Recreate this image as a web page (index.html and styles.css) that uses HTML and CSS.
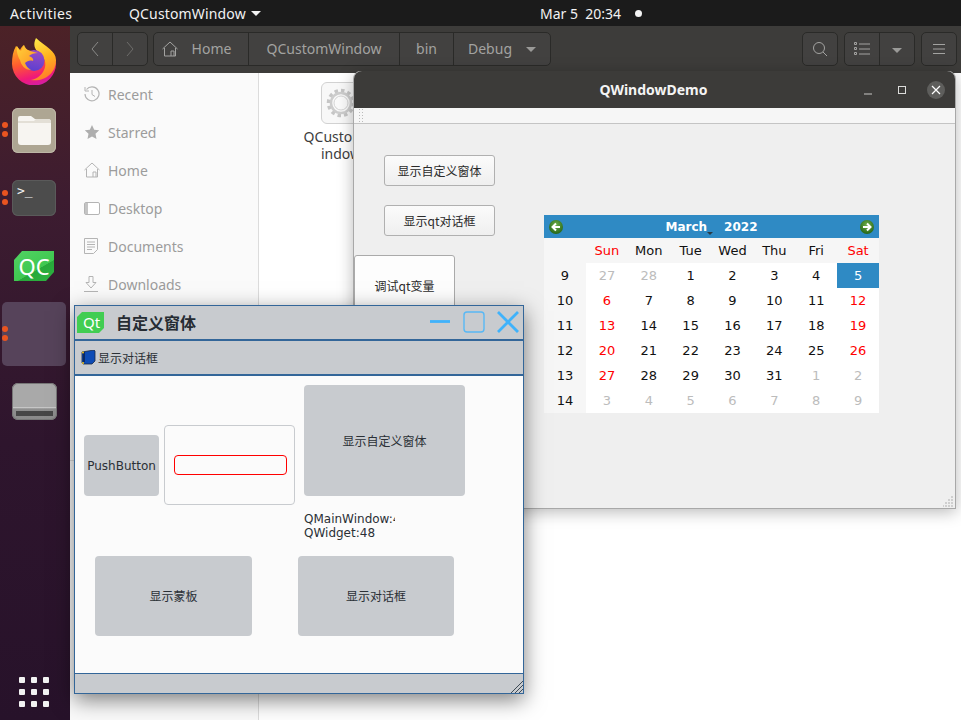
FILE: index.html
```html
<!DOCTYPE html>
<html lang="en">
<head>
<meta charset="utf-8">
<title>QCustomWindow</title>
<link rel="stylesheet" href="styles.css">
</head>
<body>
<div class="desktop">
  <header class="topbar">
    <div class="top-left"><span class="activities">Activities</span><span class="appname">QCustomWindow</span><i class="caret caret-white"></i></div>
    <div class="clock"><span>Mar 5&nbsp; 20:34</span><i class="rec"></i></div>
  </header>
  <div class="main">
    <nav class="dock">
      <div class="dock-item dock-ff">
        <svg width="48" height="48" viewBox="0 0 48 48">
          <defs>
            <linearGradient id="ffa" x1="0.3" y1="0" x2="0.6" y2="1"><stop offset="0" stop-color="#ffe847"/><stop offset=".5" stop-color="#ffb31f"/><stop offset="1" stop-color="#ff7a2a"/></linearGradient>
            <linearGradient id="ffb" x1="0.2" y1="0" x2="0.5" y2="1"><stop offset="0" stop-color="#ffb01f"/><stop offset=".45" stop-color="#ff5a30"/><stop offset=".8" stop-color="#f01a78"/><stop offset="1" stop-color="#d61ea0"/></linearGradient>
            <linearGradient id="ffc" x1="0.5" y1="0" x2="0.3" y2="1"><stop offset="0" stop-color="#9b4bc4"/><stop offset="1" stop-color="#5a3fd0"/></linearGradient>
            <linearGradient id="ffd" x1="0" y1="0" x2="1" y2="1"><stop offset="0" stop-color="#ffd23a"/><stop offset="1" stop-color="#ff8a1f"/></linearGradient>
          </defs>
          <path d="M6 9c2 1 3 3 4 4 1-2 2-4 4-5 0 2 1 4 3 5l8 2 14-2 7 13a22 22 0 1 1-44 1C2 20 3 14 6 9z" fill="url(#ffb)"/>
          <path d="M26 1c-3 6-2 11 3 15 6 4 8 11 5 17-2 5-7 9-13 10 14 2 25-7 25-20C46 14 36 10 26 1z" fill="url(#ffa)"/>
          <circle cx="24" cy="23.500" r="10.500" fill="url(#ffc)"/>
          <path d="M7 9c1 2 2 4 4 5 1-2 2-4 3-6 1 3 3 5 6 6 3 1 5 1 8 2-4 0-7 1-9 3 3 1 5 3 4 5-3-1-6 0-8 2 1 3 3 5 6 7-6 0-10-5-11-10-2-3-4-9-3-14z" fill="url(#ffd)"/>
        </svg>
      </div>
      <div class="dock-item dock-files">
        <i class="pips"></i>
        <div class="tile tile-files"><svg width="33" height="29" viewBox="0 0 33 29"><path d="M2 0h11l4 3h13a3 3 0 0 1 3 3v20a3 3 0 0 1-3 3H3a3 3 0 0 1-3-3V2a2 2 0 0 1 2-2z" fill="#f7f5f1"/><path d="M0 5h16l2-2h12a3 3 0 0 1 3 3v1H0z" fill="#e3dfd6"/></svg></div>
      </div>
      <div class="dock-item dock-term">
        <i class="pips"></i>
        <div class="tile tile-term"><span class="prompt">&gt;_</span></div>
      </div>
      <div class="dock-item dock-qc">
        <div class="qc"><span>QC</span></div>
      </div>
      <div class="dock-item dock-active"><i class="pips"></i></div>
      <div class="dock-item dock-drive">
        <div class="drive"><i></i></div>
      </div>
      <div class="apps"><i></i><i></i><i></i><i></i><i></i><i></i><i></i><i></i><i></i></div>
    </nav>

    <section class="files">
      <div class="files-head">
        <div class="btn-group nav-group">
          <span class="seg seg-nav"><svg width="10" height="16" viewBox="0 0 10 16"><path d="M8 1 2 8l6 7" fill="none" stroke="#8a8a88" stroke-width="1"/></svg></span>
          <span class="seg seg-nav"><svg width="10" height="16" viewBox="0 0 10 16"><path d="m2 1 6 7-6 7" fill="none" stroke="#6e6d6b" stroke-width="1"/></svg></span>
        </div>
        <div class="btn-group path-group">
          <span class="seg seg-home"><svg width="16" height="16" viewBox="0 0 16 16"><path d="M.5 8 8 1l7.500 7M2.500 7v8h11V7M9 15v-5h3v5" fill="none" stroke="#a3a3a1" stroke-width="1"/></svg><span>Home</span></span>
          <span class="seg seg-qc">QCustomWindow</span>
          <span class="seg seg-bin">bin</span>
          <span class="seg seg-debug">Debug<i class="caret caret-grey"></i></span>
        </div>
        <div class="head-right">
          <div class="btn-group"><span class="seg seg-icon"><svg width="16" height="16" viewBox="0 0 16 16"><circle cx="7" cy="7" r="5.500" fill="none" stroke="#a3a3a1"/><path d="m11 11 4 4" stroke="#a3a3a1"/></svg></span></div>
          <div class="btn-group">
            <span class="seg seg-view"><svg width="16" height="14" viewBox="0 0 16 14"><path d="M5 2h11M5 7h11M5 12h11" stroke="#a3a3a1"/><path d="M.5.500h2v2h-2zM.5 5.500h2v2h-2zM.5 10.500h2v2h-2z" fill="none" stroke="#a3a3a1"/></svg></span>
            <span class="seg seg-drop"><i class="caret caret-grey"></i></span>
          </div>
          <div class="btn-group"><span class="seg seg-icon"><svg width="12" height="12" viewBox="0 0 12 12"><path d="M0 1.500h12M0 6h12M0 10.500h12" stroke="#a3a3a1"/></svg></span></div>
        </div>
      </div>
      <div class="files-body">
        <aside class="side">
          <div class="side-row"><svg width="16" height="16" viewBox="0 0 16 16"><path d="M2.500 3.500A7 7 0 1 1 1 8" fill="none" stroke="#b4b4b4" stroke-width="1.200"/><path d="M1 1v4h4" fill="none" stroke="#b4b4b4"/><path d="M8 4v4.500l3 2" fill="none" stroke="#b4b4b4"/></svg><span>Recent</span></div>
          <div class="side-row"><svg width="16" height="16" viewBox="0 0 16 16"><path d="m8 1 2.200 4.700 5 .6-3.700 3.500 1 5.100L8 12.400l-4.500 2.500 1-5.100L.8 6.300l5-.6z" fill="#aeaeae"/></svg><span>Starred</span></div>
          <div class="side-row"><svg width="16" height="16" viewBox="0 0 16 16"><path d="M.5 8 8 1l7.500 7M2.500 7v8h11V7M9 15v-5h3v5" fill="none" stroke="#b4b4b4"/></svg><span>Home</span></div>
          <div class="side-row"><svg width="16" height="13" viewBox="0 0 16 13"><rect x=".5" y=".5" width="15" height="12" rx="1.500" fill="#fff" stroke="#b4b4b4"/><path d="M1 1h3v11H1z" fill="#c4c4c4"/></svg><span>Desktop</span></div>
          <div class="side-row"><svg width="14" height="16" viewBox="0 0 14 16"><path d="M.5.500h13v11l-4 4h-9z" fill="none" stroke="#b4b4b4"/><path d="M3 4h8M3 6.500h8M3 9h8M3 11.500h5" stroke="#b4b4b4"/></svg><span>Documents</span></div>
          <div class="side-row"><svg width="14" height="16" viewBox="0 0 14 16"><path d="M5 .5h4v6h3L7 12 2 6.500h3zM0 15.500h14" fill="none" stroke="#b4b4b4"/></svg><span>Downloads</span></div>
          <hr class="side-sep">
        </aside>
        <div class="file-area">
          <div class="file-item">
            <div class="file-icon"><svg width="30" height="30" viewBox="0 0 30 30"><circle cx="15" cy="15" r="12.500" fill="none" stroke="#c6c6c6" stroke-width="3.500" stroke-dasharray="3.500 3"/><circle cx="15" cy="15" r="10" fill="#fafafa" stroke="#cdcdcd" stroke-width="2.500"/><circle cx="15" cy="15" r="7" fill="none" stroke="#d4d4d4" stroke-width="1"/></svg></div>
            <div class="file-name">QCustomW<br>indow</div>
          </div>
        </div>
      </div>
    </section>
  </div>

  <section class="win-demo">
    <div class="demo-title">
      <span class="demo-name">QWindowDemo</span>
      <span class="demo-controls">
        <svg width="10" height="10" viewBox="0 0 10 10"><path d="M1 9h8" stroke="#c8c8c6"/></svg>
        <svg width="10" height="10" viewBox="0 0 10 10"><rect x="1.500" y="1.500" width="7" height="7" fill="none" stroke="#dcdcda"/></svg>
        <span class="demo-close"><svg width="10" height="10" viewBox="0 0 10 10"><path d="m1 1 8 8M9 1 1 9" stroke="#fff" stroke-width="1.200"/></svg></span>
      </span>
    </div>
    <div class="demo-toolbar"><i class="grip"></i></div>
    <div class="demo-body">
      <div class="demo-left">
        <button class="qbtn">显示自定义窗体</button>
        <button class="qbtn">显示qt对话框</button>
        <button class="qbtn qbtn-big">调试qt变量</button>
      </div>
      <div class="cal">
        <div class="cal-nav">
          <svg width="14" height="14" viewBox="0 0 14 14"><defs><radialGradient id="ga" cx=".5" cy=".35" r=".7"><stop offset="0" stop-color="#6fb04a"/><stop offset="1" stop-color="#1f5f12"/></radialGradient></defs><circle cx="7" cy="7" r="7" fill="url(#ga)"/><path d="M11 7H4M7 3.500 3.500 7 7 10.500" fill="none" stroke="#fff" stroke-width="2"/></svg>
          <span class="cal-title"><span class="cal-month">March</span><i class="cal-drop"></i><span>2022</span></span>
          <svg width="14" height="14" viewBox="0 0 14 14"><circle cx="7" cy="7" r="7" fill="url(#ga)"/><path d="M3 7h7M7 3.500 10.500 7 7 10.500" fill="none" stroke="#fff" stroke-width="2"/></svg>
        </div>
        <div class="cal-grid">
          <span class="h"></span><span class="h red">Sun</span><span class="h">Mon</span><span class="h">Tue</span><span class="h">Wed</span><span class="h">Thu</span><span class="h">Fri</span><span class="h red">Sat</span>
          <span class="wk">9</span><span class="dim">27</span><span class="dim">28</span><span>1</span><span>2</span><span>3</span><span>4</span><span class="sel">5</span>
          <span class="wk">10</span><span class="red">6</span><span>7</span><span>8</span><span>9</span><span>10</span><span>11</span><span class="red">12</span>
          <span class="wk">11</span><span class="red">13</span><span>14</span><span>15</span><span>16</span><span>17</span><span>18</span><span class="red">19</span>
          <span class="wk">12</span><span class="red">20</span><span>21</span><span>22</span><span>23</span><span>24</span><span>25</span><span class="red">26</span>
          <span class="wk">13</span><span class="red">27</span><span>28</span><span>29</span><span>30</span><span>31</span><span class="dim">1</span><span class="dim">2</span>
          <span class="wk">14</span><span class="dim">3</span><span class="dim">4</span><span class="dim">5</span><span class="dim">6</span><span class="dim">7</span><span class="dim">8</span><span class="dim">9</span>
        </div>
      </div>
    </div>
    <svg class="demo-size" width="11" height="11" viewBox="0 0 11 11"><path d="M8 0h2v2H8zM5 3h2v2H5zM8 3h2v2H8zM2 6h2v2H2zM5 6h2v2H5zM8 6h2v2H8zM-1 9h2v2h-2zM2 9h2v2H2zM5 9h2v2H5zM8 9h2v2H8z" fill="#cfcfcf"/></svg>
  </section>

  <section class="win-custom">
    <div class="cw-title">
      <svg class="qt-logo" width="27" height="21" viewBox="0 0 27 21"><path d="M5 0h22v16l-5 5H0V5z" fill="#41cd52"/></svg>
      <span class="qt-text">Qt</span>
      <span class="cw-name">自定义窗体</span>
      <span class="cw-controls">
        <svg width="22" height="22" viewBox="0 0 22 22"><path d="M1 10.500h20" stroke="#3fb2fb" stroke-width="2.800"/></svg>
        <svg width="22" height="22" viewBox="0 0 22 22"><rect x="1" y="1" width="20" height="20" rx="3" fill="none" stroke="#58b8f5" stroke-width="1.400"/></svg>
        <svg width="22" height="22" viewBox="0 0 22 22"><path d="m1 1 20 20M21 1 1 21" stroke="#3fb2fb" stroke-width="2.800"/></svg>
      </span>
    </div>
    <div class="cw-tools">
      <svg width="15" height="15" viewBox="0 0 15 15"><path d="M1 2 13 0l1 1v10l-3 3H2l-1-1z" fill="#0d4bb5" stroke="#1a2a44" stroke-width=".8"/><path d="M2 2h2v10H2z" fill="#0a2a66"/><circle cx="2" cy="2.500" r="1" fill="#f5c518"/><circle cx="2" cy="13" r="1" fill="#f5c518"/></svg>
      <span>显示对话框</span>
    </div>
    <div class="cw-body">
      <div class="cw-row1">
        <button class="flat flat-push">PushButton</button>
        <div class="frame"><div class="red-input"></div></div>
        <div class="cw-col">
          <button class="flat flat-big">显示自定义窗体</button>
          <div class="counts"><span>QMainWindow:48</span><span>QWidget:48</span></div>
        </div>
      </div>
      <div class="cw-row2">
        <button class="flat flat-mask">显示蒙板</button>
        <button class="flat flat-dlg">显示对话框</button>
      </div>
    </div>
    <div class="cw-status">
      <svg width="12" height="12" viewBox="0 0 12 12"><path d="M0 12 12 0M4 12l8-8M8 12l4-4" stroke="#3d4a55"/></svg>
    </div>
  </section>
</div>
</body>
</html>
```

FILE: styles.css
```css
* { box-sizing: border-box; }
html, body { margin: 0; padding: 0; }
body { width: 961px; height: 720px; overflow: hidden; font-family: "Noto Sans", "Noto Sans CJK SC", sans-serif; }
i { display: block; font-style: normal; }
svg { display: block; flex: none; }

.desktop { position: relative; width: 961px; height: 720px; overflow: hidden; display: flex; flex-direction: column; background: #2b1428; }

/* top bar */
.topbar { height: 26px; flex: none; background: #1b1b1b; color: #f2f2f2; font-size: 14px; position: relative; display: flex; align-items: center; justify-content: space-between; padding-left: 10px; }
.top-left { display: flex; align-items: center; }
.activities { width: 119px; letter-spacing: .4px; }
.appname { margin-right: 5px; letter-spacing: .15px; }
.clock { position: absolute; left: 540px; top: 0; height: 26px; display: flex; align-items: center; }
.rec { width: 7px; height: 7px; border-radius: 50%; background: #f4f4f4; margin-left: 14px; }
.caret { width: 0; height: 0; border-left: 5px solid transparent; border-right: 5px solid transparent; }
.caret-white { border-top: 5px solid #f2f2f2; }
.caret-grey { border-top: 5px solid #9a9a98; }

.main { flex: 1; display: flex; min-height: 0; }

/* dock */
.dock { width: 70px; flex: none; position: relative; background: linear-gradient(180deg, #4c2227 0%, #3d1c30 25%, #2e152d 60%, #27122a 100%); display: flex; flex-direction: column; padding-top: 1px; }
.dock-item { width: 64px; margin-left: 2px; position: relative; display: flex; align-items: center; justify-content: center; flex: none; }
.dock-ff { height: 68px; }
.dock-files { height: 70px; }
.dock-term { height: 65px; }
.dock-qc { height: 72px; }
.dock-active { height: 64px; background: #56435a; border-radius: 5px; }
.dock-drive { height: 71px; }
.pips { position: absolute; left: 0; top: 50%; width: 6px; height: 6px; margin-top: -8px; border-radius: 50%; background: #e95420; box-shadow: 0 9px 0 #e95420; }
.tile { width: 44px; height: 44px; border-radius: 6px; display: flex; align-items: center; justify-content: center; }
.tile-files { background: #aea693; box-shadow: inset 0 0 0 1px #bdb6a6; height: 45px; }
.tile-term { background: #4c4c4c; align-items: flex-start; justify-content: flex-start; height: 36px; box-shadow: inset 0 0 0 1px #5a5a5a; }
.prompt { color: #f4f4f4; font: 13px/1 "DejaVu Sans Mono", monospace; padding: 4px 0 0 5px; }
.qc { width: 40px; height: 30px; background: linear-gradient(150deg, #52d264 0%, #3fc850 60%, #27a83a 61%, #2db441 100%); clip-path: polygon(20% 0, 100% 0, 100% 70%, 80% 100%, 0 100%, 0 30%); display: flex; align-items: center; justify-content: center; }
.qc span { color: #fff; font: 22px/1 "Noto Sans", sans-serif; }
.drive { width: 45px; height: 37px; border-radius: 6px; background: linear-gradient(180deg, #a9a9a9 0, #a9a9a9 66%, #c9c9c9 66%, #8f8f8f 70%, #8a8a8a 100%); box-shadow: inset 0 0 0 1px #777; display: flex; align-items: flex-end; justify-content: center; padding-bottom: 4px; }
.drive i { width: 37px; height: 5px; background: #474747; }
.apps { position: absolute; left: 19px; top: 651px; width: 30px; display: grid; grid-template-columns: repeat(3, 6px); grid-auto-rows: 6px; gap: 6px; }
.apps i { background: #f2f2f2; border-radius: 1px; }

/* files window */
.files { flex: 1; display: flex; flex-direction: column; min-width: 0; background: #fff; }
.files-head { height: 47px; flex: none; background: #3d3c3a; display: flex; align-items: center; padding: 0 4px 1px 7px; }
.btn-group { height: 34px; display: flex; border: 1px solid #2a2a28; border-radius: 5px; background: #424140; }
.nav-group { width: 71px; margin-right: 5px; }
.path-group { width: 398px; }
.seg { height: 100%; display: flex; align-items: center; justify-content: center; color: #a3a3a1; font-size: 14px; border-right: 1px solid #2a2a28; padding-bottom: 2px; }
.seg:last-child { border-right: 0; }
.seg-nav { width: 35px; padding-bottom: 0; }
.seg-home { width: 95px; gap: 14px; padding-right: 9px; }
.seg-home svg { margin-top: 1px; }
.seg-qc { width: 151px; }
.seg-bin { width: 54px; }
.seg-debug { flex: 1; gap: 14px; }
.seg-debug .caret { margin-top: 3px; }
.seg-drop .caret { margin-top: 2px; }
.head-right { margin-left: auto; display: flex; gap: 6px; }
.seg-icon { width: 34px; padding-bottom: 0; }
.seg-view { width: 35px; padding-bottom: 0; }
.seg-drop { width: 34px; padding-bottom: 0; }
.files-body { flex: 1; display: flex; min-height: 0; }
.side { width: 189px; flex: none; background: #fafafa; border-right: 1px solid #dcdcdc; padding-top: 2px; }
.side-row { height: 38px; display: flex; align-items: center; color: #9c9c9c; font-size: 14px; padding-left: 14px; position: relative; }
.side-row span { position: absolute; left: 38px; }
.side-sep { margin: 157px 0 0; border: 0; border-top: 1px solid #dcdcdc; }
.file-area { flex: 1; background: #fff; padding: 9px 0 0 41px; }
.file-item { width: 82px; display: flex; flex-direction: column; align-items: center; }
.file-icon { width: 40px; height: 42px; border: 1px solid #d2d2d2; border-radius: 6px; background: #f8f8f8; display: flex; align-items: center; justify-content: center; }
.file-name { font-size: 14px; line-height: 17px; text-align: center; color: #3d3d3d; margin-top: 4px; }

/* QWindowDemo */
.win-demo { position: absolute; left: 353px; top: 71px; width: 603px; height: 438px; background: #efefef; border: 1px solid #a8a8a8; border-top: 0; border-radius: 8px 8px 0 0; box-shadow: 0 3px 16px rgba(0,0,0,.28); display: flex; flex-direction: column; }
.demo-title { height: 37px; flex: none; background: #3c3b39; border-radius: 8px 8px 0 0; position: relative; display: flex; align-items: center; justify-content: center; padding-right: 2px; }
.demo-name { color: #f4f4f4; font: 700 14px "Noto Sans", sans-serif; }
.demo-controls { position: absolute; left: 509px; top: 0; height: 37px; display: flex; align-items: center; gap: 24px; }
.demo-close { width: 18px; height: 18px; border-radius: 50%; background: #5e5e5c; display: flex; align-items: center; justify-content: center; margin-left: -4px; }
.demo-toolbar { height: 16px; flex: none; background: #f6f6f6; border-bottom: 1px solid #c4c4c4; padding: 0 0 0 4px; }
.grip { width: 6px; height: 15px; background-image: radial-gradient(circle, #bbb 0.7px, transparent 0.8px); background-size: 3px 3px; }
.demo-body { flex: 1; display: flex; min-height: 0; }
.demo-left { width: 190px; flex: none; display: flex; flex-direction: column; align-items: flex-start; padding-top: 31px; }
.qbtn { width: 111px; height: 31px; margin: 0 0 19px 30px; padding: 0; border: 1px solid #b0b0b0; border-radius: 3px; background: linear-gradient(180deg, #fbfbfb, #efefef); color: #2a2a2a; font: 12px "Noto Sans CJK SC", "Noto Sans", sans-serif; }
.qbtn-big { width: 101px; height: 62px; margin: 0; padding-bottom: 2px; border-color: #aaa; background: #fdfdfd; }
.cal { width: 335px; margin-top: 91px; align-self: flex-start; }
.cal-nav { height: 23px; background: #2f8ac4; display: flex; align-items: center; justify-content: space-between; padding: 0 5px; }
.cal-title { color: #fff; font: 700 12px "DejaVu Sans", sans-serif; display: flex; align-items: center; position: relative; }
.cal-month { margin-right: 17px; }
.cal-drop { position: absolute; left: 42px; top: 12px; width: 0; height: 0; border-left: 3px solid transparent; border-right: 3px solid transparent; border-top: 3px solid #2b3a44; }
.cal-grid { display: grid; grid-template-columns: 42px repeat(7, 1fr); grid-template-rows: repeat(7, 25px); background: #fff; font: 13px "DejaVu Sans", sans-serif; color: #111; }
.cal-grid span { display: flex; align-items: center; justify-content: center; }
.cal-grid .h { background: #f6f6f6; }
.cal-grid .wk { background: #f6f6f6; }
.cal-grid .red { color: #f00; }
.cal-grid .dim { color: #bcbcbc; }
.cal-grid .sel { background: #2f8ac4; color: #fff; }
.demo-size { position: absolute; right: 1px; bottom: 1px; }

/* custom window */
.win-custom { position: absolute; left: 74px; top: 305px; width: 450px; height: 389px; border: 1px solid #336699; background: #fbfbfb; box-shadow: 0 6px 20px rgba(0,0,0,.5); display: flex; flex-direction: column; }
.cw-title { height: 33px; flex: none; background: #c8cbcf; display: flex; align-items: center; position: relative; padding-left: 2px; }
.qt-text { position: absolute; left: 8px; top: 6px; color: #fff; font: 15px/20px "Noto Sans", sans-serif; }
.cw-name { margin: 0 0 2px 12px; font: 700 16px "Noto Sans CJK SC", sans-serif; color: #262c33; }
.cw-controls { position: absolute; left: 354px; top: 5px; display: flex; gap: 12px; }
.cw-tools { height: 37px; flex: none; background: #c8cbcf; border-top: 2px solid #336699; border-bottom: 2px solid #336699; display: flex; align-items: center; padding-left: 6px; gap: 2px; color: #2a3036; font: 12px "Noto Sans CJK SC", sans-serif; }
.cw-body { flex: 1; min-height: 0; padding-top: 9px; }
.cw-row1 { display: flex; align-items: flex-start; padding-left: 9px; height: 155px; }
.flat { border: 0; border-radius: 4px; background: #c8cbcf; color: #2b3036; padding: 0; font: 12px "Noto Sans CJK SC", sans-serif; }
.flat-push { width: 75px; height: 61px; margin-top: 50px; font-family: "DejaVu Sans", sans-serif; }
.frame { width: 131px; height: 80px; margin: 40px 9px 0 5px; border: 1px solid #c8cbcf; border-radius: 4px; padding: 29px 7px 0 9px; }
.red-input { height: 20px; border: 1px solid #f00; border-radius: 4px; }
.cw-col { width: 161px; display: flex; flex-direction: column; }
.flat-big { height: 111px; }
.counts { width: 91px; margin-top: 16px; overflow: hidden; font: 12px/14px "DejaVu Sans", sans-serif; color: #2b3036; white-space: nowrap; display: flex; flex-direction: column; }
.cw-row2 { display: flex; margin-top: 16px; padding-left: 20px; gap: 46px; }
.flat-mask { width: 157px; height: 80px; padding-bottom: 2px; }
.flat-dlg { width: 156px; height: 80px; padding-bottom: 2px; }
.cw-status { height: 20px; flex: none; background: #c8cbcf; border-top: 1px solid #336699; display: flex; justify-content: flex-end; align-items: flex-end; }
```
